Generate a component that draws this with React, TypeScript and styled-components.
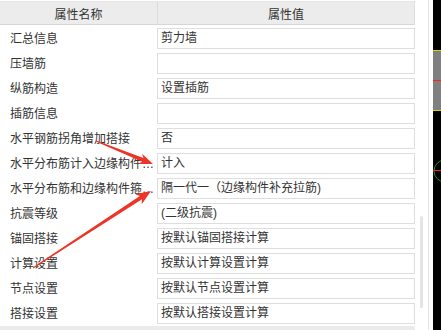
import React from 'react';
import styled, { createGlobalStyle } from 'styled-components';

const GlobalStyle = createGlobalStyle`
  html, body {
    margin: 0;
    padding: 0;
    background: #ffffff;
  }
  body {
    font-family: 'Liberation Sans', 'Noto Sans CJK SC', sans-serif;
  }
`;

const Frame = styled.div`
  display: flex;
  width: 441px;
  height: 330px;
  overflow: hidden;
  background: #ffffff;
`;

const Panel = styled.div`
  position: relative;
  display: flex;
  flex: 0 0 433px;
  background: #ffffff;
`;

const Grid = styled.div`
  display: flex;
  flex-direction: column;
  width: 415px;
`;

const HeaderRow = styled.div`
  display: grid;
  grid-template-columns: 157px 1fr;
  height: 22px;
  margin-top: 1px;
  border-top: 1px solid #e6e6e6;
  border-bottom: 1px solid #d6d6d6;
  border-right: 1px solid #dcdcdc;
  background: #ececec;
`;

const HeaderCell = styled.div`
  display: flex;
  align-items: center;
  justify-content: center;
  font-size: 12px;
  color: #333333;

  & + & {
    border-left: 1px solid #dddddd;
  }
`;

const Row = styled.div`
  display: grid;
  grid-template-columns: 157px 1fr;
  height: 25px;
`;

const Label = styled.div`
  align-self: center;
  padding: 2px 0 0 10px;
  font-size: 12px;
  line-height: 16px;
  color: #333333;
  white-space: nowrap;
  overflow: hidden;
  text-overflow: ellipsis;
`;

const ValueBox = styled.div`
  align-self: end;
  box-sizing: border-box;
  height: 21px;
  margin-bottom: 1px;
  padding-left: 3px;
  border: 1px solid #dedede;
  background: #ffffff;
  font-size: 12px;
  line-height: 19px;
  color: #333333;
  white-space: nowrap;
  overflow: hidden;
`;

const HScroll = styled.div`
  height: 4px;
  margin-top: 1px;
  background: #ebebeb;
`;

const ScrollTrack = styled.div`
  flex: 0 0 13px;
  box-sizing: border-box;
  padding: 216px 0 0 5px;
`;

const Thumb = styled.div`
  width: 3px;
  height: 92px;
  border-radius: 2px;
  background: #e4e4e4;
`;

const Divider = styled.div`
  flex: 0 0 1px;
  background: #e3e3e3;
`;

const Canvas = styled.div`
  flex: 0 0 8px;
  background: #000000;
`;

const Overlay = styled.svg`
  position: absolute;
  top: 0;
  left: 0;
  pointer-events: none;
`;

const rows: [string, string][] = [
  ['汇总信息', '剪力墙'],
  ['压墙筋', ''],
  ['纵筋构造', '设置插筋'],
  ['插筋信息', ''],
  ['水平钢筋拐角增加搭接', '否'],
  ['水平分布筋计入边缘构件体积', '计入'],
  ['水平分布筋和边缘构件箍筋关系', '隔一代一（边缘构件补充拉筋)'],
  ['抗震等级', '(二级抗震)'],
  ['锚固搭接', '按默认锚固搭接计算'],
  ['计算设置', '按默认计算设置计算'],
  ['节点设置', '按默认节点设置计算'],
  ['搭接设置', '按默认搭接设置计算'],
];

type Pt = [number, number];

// tapered shaft + head, like a screenshot-tool arrow
const arrowPoints = (tail: Pt, tip: Pt, headLen: number, headHalf: number) => {
  const dx = tip[0] - tail[0];
  const dy = tip[1] - tail[1];
  const len = Math.hypot(dx, dy);
  const ux = dx / len;
  const uy = dy / len;
  const nx = -uy;
  const ny = ux;
  const bx = tip[0] - ux * headLen;
  const by = tip[1] - uy * headLen;
  const nbx = tip[0] - ux * (headLen - 3);
  const nby = tip[1] - uy * (headLen - 3);
  const pts: Pt[] = [
    [tail[0] + nx * 0.5, tail[1] + ny * 0.5],
    [nbx + nx * 2, nby + ny * 2],
    [bx + nx * headHalf, by + ny * headHalf],
    tip,
    [bx - nx * headHalf, by - ny * headHalf],
    [nbx - nx * 2, nby - ny * 2],
    [tail[0] - nx * 0.5, tail[1] - ny * 0.5],
  ];
  return pts.map((p) => `${p[0].toFixed(1)},${p[1].toFixed(1)}`).join(' ');
};

const Arrows: React.FC = () => (
  <Overlay width="433" height="330" viewBox="0 0 433 330">
    <polygon points={arrowPoints([96, 141], [153, 164], 14, 5.5)} fill="#ee3327" />
    <polygon points={arrowPoints([33, 268], [151, 191], 15, 6)} fill="#ee3327" />
  </Overlay>
);

const CanvasDrawing: React.FC = () => (
  <svg width="8" height="330" viewBox="0 0 8 330">
    <rect x="0" y="51" width="8" height="59" fill="#808080" />
    <rect x="0" y="50" width="8" height="1" fill="#d8d800" />
    <rect x="0" y="110" width="8" height="1" fill="#d8d800" />
    <rect x="0" y="80" width="8" height="1" fill="#ff2020" />
    <circle cx="12" cy="171" r="11" fill="none" stroke="#1a9a1a" strokeWidth="1" />
    <rect x="0" y="170" width="8" height="1" fill="#ff2020" />
  </svg>
);

const App: React.FC = () => {
  return (
    <Frame>
      <GlobalStyle />
      <Panel>
        <Grid>
          <HeaderRow>
            <HeaderCell>属性名称</HeaderCell>
            <HeaderCell>属性值</HeaderCell>
          </HeaderRow>
          {rows.map(([name, value]) => (
            <Row key={name}>
              <Label>{name}</Label>
              <ValueBox>{value}</ValueBox>
            </Row>
          ))}
          <HScroll />
        </Grid>
        <ScrollTrack>
          <Thumb />
        </ScrollTrack>
        <Divider />
        <Arrows />
      </Panel>
      <Canvas>
        <CanvasDrawing />
      </Canvas>
    </Frame>
  );
};

export default App;
